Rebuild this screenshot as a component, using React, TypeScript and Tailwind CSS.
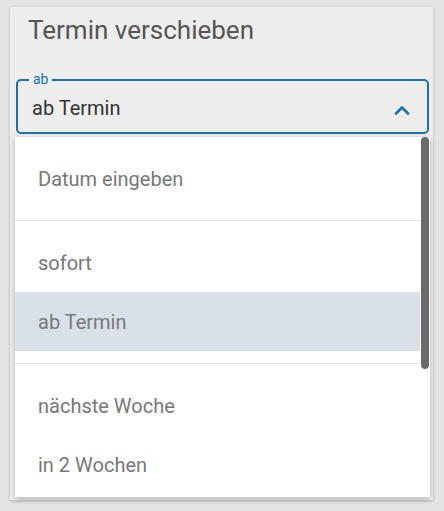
const OPTION_GROUPS: string[][] = [
  ["Datum eingeben"],
  ["sofort", "ab Termin"],
  ["nächste Woche", "in 2 Wochen"],
];

const SELECTED = "ab Termin";

function CaretUp() {
  return (
    <svg width="16" height="10" viewBox="0 0 16 10" className="mt-[4px] shrink-0 text-[#1a70b5]">
      <polyline
        points="2,8.5 8,2.5 14,8.5"
        fill="none"
        stroke="currentColor"
        strokeWidth="2.6"
        strokeLinecap="round"
        strokeLinejoin="round"
      />
    </svg>
  );
}

export default function App() {
  return (
    <div className="min-h-[511px] bg-[#e4e4e4] pt-[7px] pl-[10px] pr-[11px] font-['Roboto',sans-serif]">
      <div className="flex h-[493px] flex-col bg-[#eeeeee] pl-[5px] pr-[3px] shadow-[0_1px_3px_rgba(0,0,0,0.2)]">
        <h2 className="pl-[13px] pt-[6px] text-[26px] leading-[34px] text-[#555555]">Termin verschieben</h2>

        <div className="relative mx-[1px] mt-[32px] flex h-[55px] items-center rounded-[5px] border-2 border-[#1a70b5] pl-[14px] pr-[17px] pt-[3px]">
          <span className="absolute -top-[10px] left-[11px] bg-[#eeeeee] px-[4px] text-[14px] leading-[16px] text-[#1a70b5]">
            ab
          </span>
          <span className="flex-1 text-[20px] text-[#333333]">{SELECTED}</span>
          <CaretUp />
        </div>

        <div className="relative mb-[3px] mt-[3px] flex-1 overflow-hidden bg-white shadow-[0_2px_6px_rgba(0,0,0,0.25)]">
          <div className="mr-[10px]">
            {OPTION_GROUPS.map((group, gi) => (
              <div key={gi} className={`py-[12px] ${gi > 0 ? "border-t border-[#e2e2e2]" : ""}`}>
                {group.map((label) => (
                  <div
                    key={label}
                    className={`flex h-[59px] items-center pl-[23px] text-[20px] text-[#787878] ${
                      label === SELECTED ? "bg-[#d8e0e8]" : ""
                    }`}
                  >
                    {label}
                  </div>
                ))}
              </div>
            ))}
          </div>
          <div className="absolute right-[1px] top-0 h-[232px] w-[8px] rounded-[4px] bg-[#6b6b6b]" />
        </div>
      </div>
    </div>
  );
}
